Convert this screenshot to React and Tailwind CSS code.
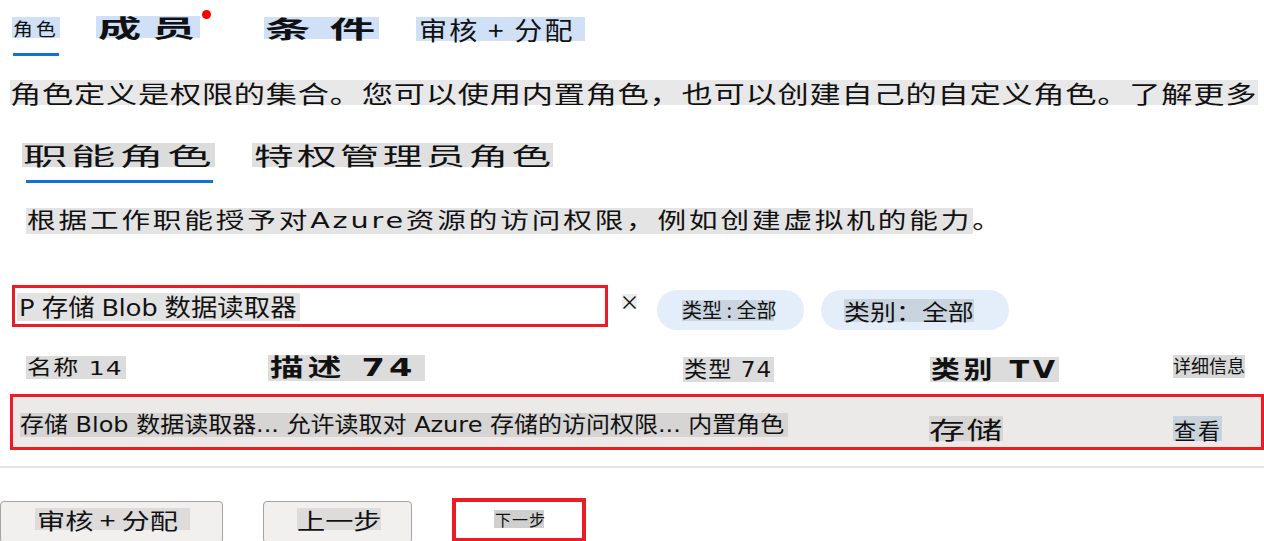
import React from "react";

const S = ({ box, txt, children }) => (
  <div className={`flex shrink-0 items-center overflow-visible ${box}`}>
    <span className={`origin-left whitespace-nowrap leading-none ${txt}`}>{children}</span>
  </div>
);

export default function App() {
  return (
    <div className="w-[1264px] h-[541px] overflow-hidden bg-white text-[#111] font-['Noto_Sans_CJK_SC',sans-serif]">
      {/* top tabs */}
      <div className="flex h-[56px] items-start pt-[16px]">
        <div className="ml-[12px] flex flex-col">
          <S box="mt-[1px] w-[48px] h-[21px] bg-[#cfe0f7] pl-[1px]" txt="text-[18px] tracking-[3px] scale-x-[1.1]">角色</S>
          <div className="ml-[1px] mt-[15px] h-[3px] w-[46px] bg-[#0f74d1]" />
        </div>
        <div className="relative ml-[36px]">
          <S box="w-[104px] h-[22px] bg-[#cfe0f7] pl-[2px]" txt="text-[24px] font-bold tracking-[6px] scale-x-[1.8]">成员</S>
          <span className="absolute -right-[11px] -top-[6px] h-[9px] w-[9px] rounded-full bg-[#f00]" />
        </div>
        <S box="ml-[64px] mt-[1px] w-[115px] h-[22px] bg-[#cfe0f7] pl-[1px]" txt="text-[24px] font-bold tracking-[10px] scale-x-[1.9]">条件</S>
        <S box="ml-[37px] mt-[1px] w-[169px] h-[24px] bg-[#cfe0f7] pl-[3px]" txt="text-[25px] tracking-[2px] scale-x-[1.12]">审核 + 分配</S>
      </div>

      {/* paragraph */}
      <S box="ml-[10px] mt-[24px] w-[1248px] h-[25px] bg-[#e8e8e8]" txt="text-[24px] tracking-[0.6px] scale-x-[1.3]">
        角色定义是权限的集合。您可以使用内置角色，也可以创建自己的自定义角色。了解更多
      </S>

      {/* sub tabs */}
      <div className="mt-[38px] flex items-start">
        <div className="ml-[22px] flex flex-col">
          <S box="w-[193px] h-[24px] bg-[#dcdcdc] pl-[1px]" txt="text-[24px] tracking-[2px] scale-x-[1.85]">职能角色</S>
          <div className="ml-[4px] mt-[13px] h-[3px] w-[187px] bg-[#0f74d1]" />
        </div>
        <S box="ml-[37px] w-[301px] h-[24px] bg-[#e0e0e0] pl-[2px]" txt="text-[24px] tracking-[2px] scale-x-[1.65]">特权管理员角色</S>
      </div>

      {/* description */}
      <S box="ml-[26px] mt-[25px] w-[947px] h-[26px] bg-[#e4e4e4] pl-[1px]" txt="text-[22px] tracking-[2.2px] scale-x-[1.3] font-['DejaVu_Sans','Noto_Sans_CJK_SC',sans-serif]">
        根据工作职能授予对Azure资源的访问权限，例如创建虚拟机的能力。
      </S>

      {/* search + filters */}
      <div className="mt-[51px] flex h-[45px] items-start">
        <div className="ml-[12px] flex h-[42px] w-[596px] items-start border-[3px] border-[#ec1c24] pl-[2px] pt-[5px]">
          <S box="w-[283px] h-[28px] bg-[#e2e2e2] pl-[2px]" txt="text-[24px] scale-x-[1.1] font-['Noto_Sans','Noto_Sans_CJK_SC',sans-serif]">P 存储 Blob 数据读取器</S>
        </div>
        <div className="ml-[14px] mt-[9px] flex h-[15px] w-[15px] items-center justify-center bg-[#ececec] text-[20px] leading-none">×</div>
        <div className="ml-[20px] mt-[5px] flex h-[40px] w-[147px] items-center rounded-full bg-[#e3eefa] pl-[25px]">
          <S box="w-[92px] h-[21px] bg-[#c9d4de]" txt="text-[20px]">类型 : 全部</S>
        </div>
        <div className="ml-[17px] mt-[5px] flex h-[40px] w-[188px] items-center rounded-full bg-[#e3eefa] pl-[23px]">
          <S box="w-[130px] h-[23px] bg-[#c9d4de]" txt="text-[22px] scale-x-[1.18]">类别：全部</S>
        </div>
      </div>

      {/* headers */}
      <div className="mt-[25px] flex h-[27px] items-start font-['DejaVu_Sans','Noto_Sans_CJK_SC',sans-serif]">
        <S box="ml-[26px] mt-[1px] w-[100px] h-[23px] bg-[#dcdcdc] pl-[1px]" txt="text-[20px] tracking-[1px] scale-x-[1.25]">名称 14</S>
        <S box="ml-[142px] w-[157px] h-[26px] bg-[#dcdcdc] pl-[2px]" txt="text-[24px] font-bold tracking-[3px] scale-x-[1.4]">描述 74</S>
        <S box="ml-[258px] mt-[2px] w-[91px] h-[25px] bg-[#dcdcdc] pl-[1px]" txt="text-[22px] tracking-[1px] scale-x-[1.05]">类型 74</S>
        <S box="ml-[156px] mt-[2px] w-[129px] h-[25px] bg-[#dcdcdc] pl-[1px]" txt="text-[24px] font-bold tracking-[3px] scale-x-[1.2]">类别 TV</S>
        <S box="ml-[114px] w-[72px] h-[23px] bg-[#d8d8d8]" txt="text-[18px]">详细信息</S>
      </div>

      {/* selected row */}
      <div className="ml-[10px] mt-[12px] flex h-[56px] w-[1254px] items-start border-[3px] border-[#ec1c24] bg-[#ebeae8]">
        <S box="ml-[7px] mt-[16px] w-[768px] h-[24px] bg-[#d6d5d3]" txt="text-[22px] scale-x-[1.09] font-['DejaVu_Sans','Noto_Sans_CJK_SC',sans-serif]">
          存储 Blob 数据读取器... 允许读取对 Azure 存储的访问权限... 内置角色
        </S>
        <S box="ml-[141px] mt-[19px] w-[74px] h-[25px] bg-[#d6d5d3]" txt="text-[24px] tracking-[1px] scale-x-[1.5]">存储</S>
        <S box="ml-[170px] mt-[19px] w-[49px] h-[25px] bg-[#c9d3dc] pl-[1px]" txt="text-[22px] tracking-[2px]">查看</S>
      </div>

      {/* divider */}
      <div className="mt-[16px] h-[2px] w-full bg-[#e3e3e3]" />

      {/* buttons */}
      <div className="mt-[30px] flex items-start">
        <div className="mt-[3px] flex h-[42px] w-[223px] items-start rounded-[4px] border border-[#a3a3a3] bg-[#f1f0ef] pl-[34px] pt-[6px]">
          <S box="w-[155px] h-[22px] bg-[#dddcdb] pl-[2px]" txt="text-[22px] scale-x-[1.28]">审核 + 分配</S>
        </div>
        <div className="ml-[40px] mt-[3px] flex h-[42px] w-[149px] items-start rounded-[4px] border border-[#a3a3a3] bg-[#f1f0ef] pl-[33px] pt-[6px]">
          <S box="w-[84px] h-[22px] bg-[#dddcdb]" txt="text-[22px] scale-x-[1.28]">上一步</S>
        </div>
        <div className="ml-[40px] flex h-[44px] w-[134px] items-start border-[4px] border-[#ec1c24] bg-white pl-[38px] pt-[8px]">
          <S box="w-[50px] h-[18px] bg-[#cfcfcf] pl-[1px]" txt="text-[16px] tracking-[1px]">下一步</S>
        </div>
      </div>
    </div>
  );
}
